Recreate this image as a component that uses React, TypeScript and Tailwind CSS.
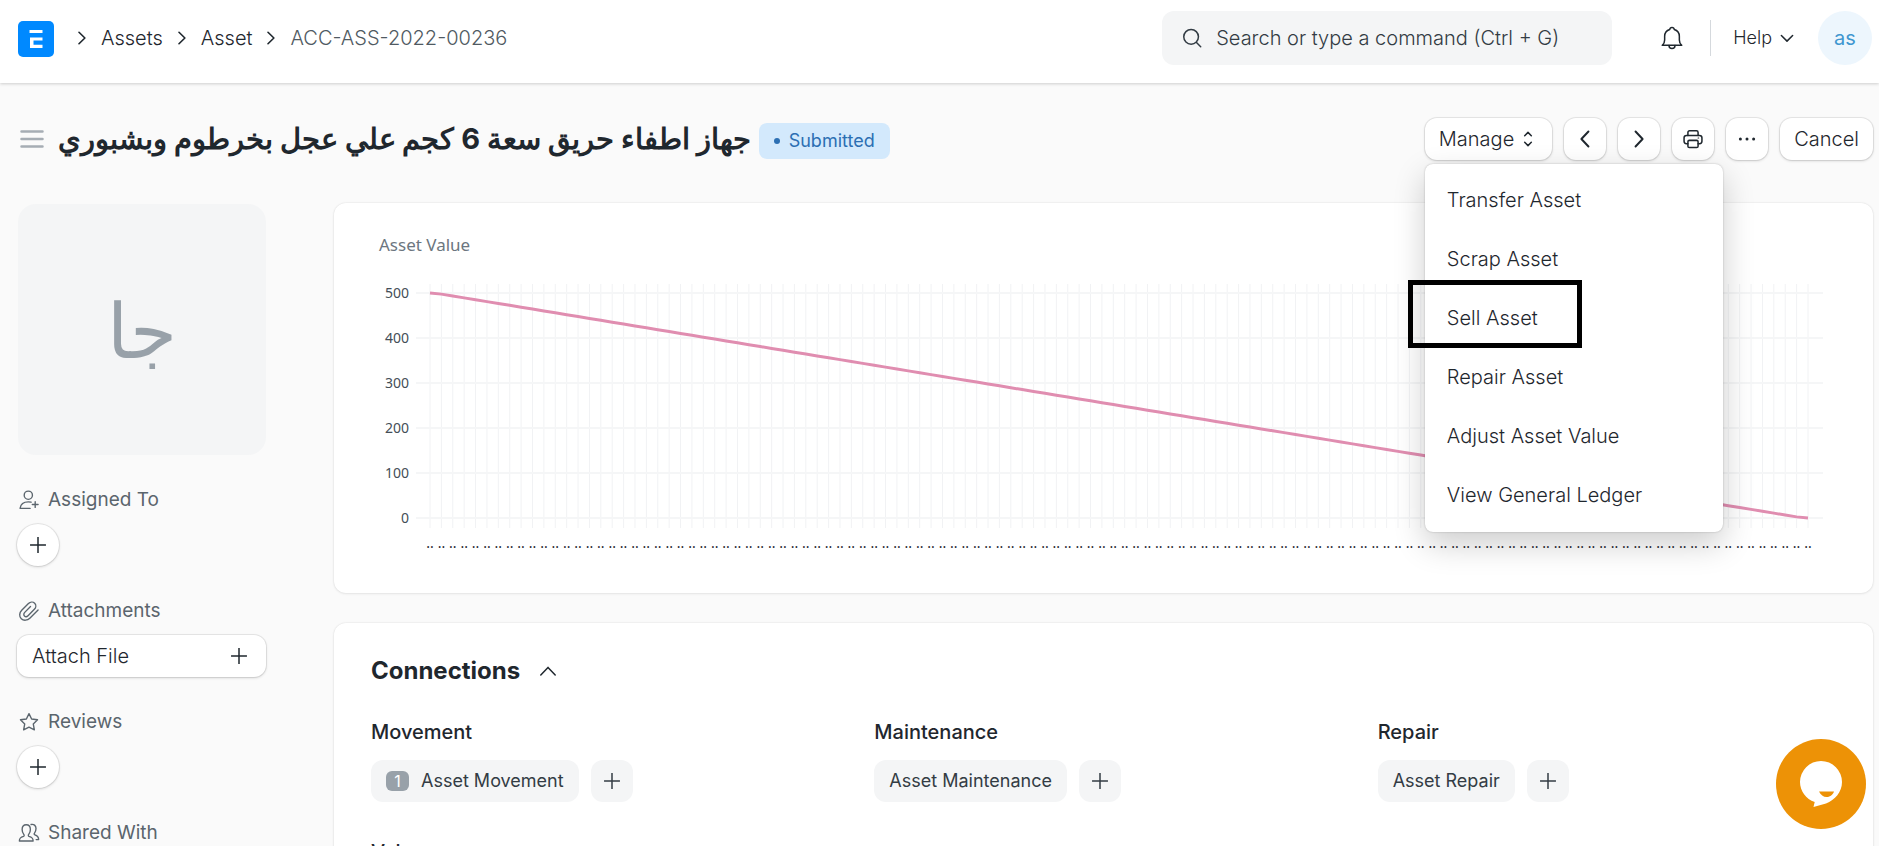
import React from "react";

const menuItems = [
  "Transfer Asset",
  "Scrap Asset",
  "Sell Asset",
  "Repair Asset",
  "Adjust Asset Value",
  "View General Ledger",
];

const connections = [
  { title: "Movement", doctype: "Asset Movement", count: 1 },
  { title: "Maintenance", doctype: "Asset Maintenance" },
  { title: "Repair", doctype: "Asset Repair" },
  { title: "Value", doctype: "Asset Value Adjustment" },
];

const btn =
  "flex h-[42px] items-center rounded-xl bg-white text-[#1f272e] shadow-[0_0_0_1px_rgba(0,0,0,0.07),0_1px_3px_rgba(0,0,0,0.16)]";
const card =
  "rounded-xl bg-white shadow-[0_0_2px_rgba(0,0,0,0.12),0_1px_3px_rgba(0,0,0,0.06)]";

type IconProps = {
  className?: string;
  width?: number;
  children: React.ReactNode;
};

const Icon = ({ className = "size-6", width = 1, children }: IconProps) => (
  <svg
    viewBox="0 0 16 16"
    className={`shrink-0 ${className}`}
    fill="none"
    stroke="currentColor"
    strokeWidth={width}
    strokeLinecap="round"
    strokeLinejoin="round"
    aria-hidden="true"
  >
    {children}
  </svg>
);

const Plus = () => (
  <Icon>
    <path d="M8 2.7v10.6M2.7 8h10.6" strokeLinecap="butt" />
  </Icon>
);

const ChevronRight = () => (
  <Icon className="size-5" width={1.3}>
    <path d="M5.6 3.4 10.3 8l-4.7 4.6" />
  </Icon>
);

const Navbar = () => (
  <header className="flex h-[83px] shrink-0 items-center bg-white pr-[7px] pb-[7px] pl-[18px] shadow-[0_1px_3px_rgba(0,0,0,0.18)]">
    <a href="#home" aria-label="Home" className="mt-[2px]">
      <svg viewBox="0 0 36 36" className="size-9">
        <rect width="36" height="36" rx="5" fill="#0089ff" />
        <path
          d="M11.5 9H24.5V12H11.5zM12 16.500H24.500V19.500H15.500V23.800H24.500V27H12z"
          fill="#fff"
        />
      </svg>
    </a>
    <nav
      aria-label="Breadcrumb"
      className="ml-[18px] flex items-center gap-[9px] text-xl font-light text-[#1f272e]"
    >
      <ChevronRight />
      <a href="#assets">Assets</a>
      <ChevronRight />
      <a href="#asset">Asset</a>
      <ChevronRight />
      <a href="#doc" className="text-[#505a62]">
        ACC-ASS-2022-00236
      </a>
    </nav>
    <label className="ml-auto flex h-[54px] w-[450px] items-center gap-3 rounded-xl bg-[#f4f5f6] px-[18px] text-[#333c44]">
      <Icon>
        <circle cx="7.4" cy="7.2" r="4.9" />
        <path d="m11 11 2.8 2.8" />
      </Icon>
      <input
        type="text"
        aria-label="Search"
        placeholder="Search or type a command (Ctrl + G)"
        className="w-full bg-transparent text-xl font-light outline-none placeholder:text-[#333c44]"
      />
    </label>
    <button type="button" aria-label="Notifications" className="ml-12">
      <Icon className="size-6 text-[#1f272e]">
        <path d="M1.500 12.900h13c-1.200-1-1.600-2-1.600-3.600V6.800C12.900 4.600 11.500 2.900 9.500 2.300 9.400 1.500 8.800 1 8 1s-1.400.5-1.500 1.300C4.500 2.900 3.100 4.600 3.100 6.800v2.500c0 1.600-.4 2.600-1.600 3.600Z" />
        <path d="M6 13c0 1.200.8 2 2 2s2-.8 2-2" />
      </Icon>
    </button>
    <div className="mr-[22px] ml-[26px] h-9 w-px bg-[#d5d9dd]" />
    <button
      type="button"
      className="flex items-center gap-[5px] text-lg font-light text-[#1f272e]"
    >
      Help
      <Icon className="size-5" width={1.2}>
        <path d="M3.500 6 8 10.500 12.500 6" />
      </Icon>
    </button>
    <button
      type="button"
      className="ml-[21px] size-[54px] rounded-full bg-[#edf6fd] text-xl text-[#3f97d0]"
    >
      as
    </button>
  </header>
);

const ManageMenu = () => (
  <div className="relative">
    <button
      type="button"
      aria-expanded="true"
      className={`${btn} gap-[2px] pr-3 pl-[14px] text-xl font-light`}
    >
      Manage
      <Icon>
        <path d="M5.800 5.800 8 3.600l2.200 2.200M5.800 10.200l2.200 2.200 2.200-2.200" />
      </Icon>
    </button>
    <ul className="absolute top-[46px] left-0 z-10 flex w-[298px] flex-col rounded-lg bg-white py-[7px] text-xl font-light text-[#1f272e] shadow-[0_0_2px_rgba(0,0,0,0.25),0_12px_32px_rgba(0,0,0,0.2)]">
      {menuItems.map((item) => (
        <li key={item} className="relative">
          <a href="#action" className="block px-[22px] py-[14px] leading-[31px]">
            {item}
          </a>
          {item === "Sell Asset" && (
            <span className="pointer-events-none absolute -top-[9px] -left-[17px] h-[68px] w-[174px] border-5 border-black" />
          )}
        </li>
      ))}
    </ul>
  </div>
);

const PageHead = () => (
  <div className="flex items-center pt-[35px] pr-[6px] pl-5">
    <button type="button" aria-label="Toggle sidebar" className="text-[#a6adb4]">
      <svg
        viewBox="0 0 24 24"
        className="size-6"
        stroke="currentColor"
        strokeWidth="2.5"
        strokeLinecap="round"
      >
        <path d="M1.500 4.500h21M1.500 12h21M1.500 19.500h21" />
      </svg>
    </button>
    <h1
      dir="rtl"
      className="ml-[14px] text-[29px] leading-[42px] font-bold whitespace-nowrap text-[#1f272e]"
    >
      جهاز اطفاء حريق سعة 6 كجم علي عجل بخرطوم وبشبوري
    </h1>
    <span className="mt-1 ml-2 flex h-9 items-center gap-[9px] rounded-lg bg-[#d3e9fc] px-[15px] text-lg text-[#2c6fb3]">
      <span className="size-[6px] rounded-full bg-[#2c6fb3]" />
      Submitted
    </span>
    <div className="ml-auto flex gap-3">
      <ManageMenu />
      <button
        type="button"
        aria-label="Previous"
        className={`${btn} w-[42px] justify-center`}
      >
        <Icon width={1.3}>
          <path d="M10.300 3 5.600 8l4.700 5" />
        </Icon>
      </button>
      <button
        type="button"
        aria-label="Next"
        className={`${btn} w-[42px] justify-center`}
      >
        <Icon width={1.3}>
          <path d="M5.700 3 10.400 8l-4.700 5" />
        </Icon>
      </button>
      <button
        type="button"
        aria-label="Print"
        className={`${btn} w-[42px] justify-center`}
      >
        <Icon className="size-[22px]" width={1.1}>
          <path d="M4.300 5.400V3.200c0-.7.500-1.200 1.200-1.200h5c.7 0 1.200.5 1.200 1.200v2.200" />
          <path d="M4.300 11.400H3.200c-.9 0-1.700-.7-1.700-1.700V7.100c0-.9.800-1.700 1.700-1.700h9.600c.9 0 1.700.8 1.700 1.700v2.600c0 1-.8 1.700-1.700 1.700h-1.100" />
          <rect x="4.300" y="9" width="7.400" height="5.200" rx="1" />
          <path d="M11.700 7.300h.4" strokeWidth=".8" />
        </Icon>
      </button>
      <button
        type="button"
        aria-label="Menu"
        className={`${btn} w-[42px] justify-center`}
      >
        <Icon>
          <g fill="currentColor" stroke="none">
            <circle cx="3.600" cy="8" r="1" />
            <circle cx="8" cy="8" r="1" />
            <circle cx="12.400" cy="8" r="1" />
          </g>
        </Icon>
      </button>
      <button type="button" className={`${btn} px-[14px] text-xl font-light`}>
        Cancel
      </button>
    </div>
  </div>
);

type SectionProps = {
  title: string;
  icon: React.ReactNode;
  children?: React.ReactNode;
};

const SidebarSection = ({ title, icon, children }: SectionProps) => (
  <section className="mb-[33px] flex flex-col gap-3">
    <h2 className="flex h-6 items-center gap-2 pl-px text-[19px] text-[#5b656d]">
      <Icon className="size-[22px]">{icon}</Icon>
      {title}
    </h2>
    {children}
  </section>
);

const AddButton = ({ label }: { label: string }) => (
  <button
    type="button"
    aria-label={label}
    className="flex size-[42px] items-center justify-center rounded-full bg-white text-[#1f272e] shadow-[0_0_0_1px_rgba(0,0,0,0.07),0_1px_3px_rgba(0,0,0,0.16)]"
  >
    <Plus />
  </button>
);

const Sidebar = () => (
  <aside className="w-[249px] shrink-0 pt-px">
    <div className="mb-[33px] ml-px flex h-[251px] items-center justify-center rounded-[18px] bg-[#f4f5f6] text-[76px] text-[#98a1a9]">
      جا
    </div>
    <SidebarSection
      title="Assigned To"
      icon={
        <>
          <circle cx="7.500" cy="4.500" r="3" />
          <path d="M9.500 9.600c-.6-.2-1.300-.2-2-.2-3.300 0-5.600 1.900-6 4.700h7.300M12.500 9.200v4.200M10.400 11.300h4.200" />
        </>
      }
    >
      <AddButton label="Assign" />
    </SidebarSection>
    <SidebarSection
      title="Attachments"
      icon={
        <path d="M14.600 7.300 8.600 13.200c-1.800 1.800-4.500 2-6.200.4S.9 9.300 2.700 7.500l4.900-4.900c1.300-1.300 3.300-1.500 4.500-.3s1.100 3.200-.2 4.500l-4.600 4.600c-.8.800-1.900.9-2.600.2s-.6-1.800.2-2.600l4.200-4.200" />
      }
    >
      <button
        type="button"
        className={`${btn} justify-between px-[15px] text-xl font-light`}
      >
        Attach File
        <Plus />
      </button>
    </SidebarSection>
    <SidebarSection
      title="Reviews"
      icon={
        <path d="m8 1.900 1.900 3.900 4.300.6-3.100 3 .8 4.300L8 11.700l-3.900 2 .8-4.300-3.100-3 4.300-.6Z" />
      }
    >
      <AddButton label="Add review" />
    </SidebarSection>
    <SidebarSection
      title="Shared With"
      icon={
        <>
          <path d="M1 13.800c0-2 .6-2.600 3-3.300.6-.2.600-1 .2-1.500C3.400 8 3 7 3 5.500 3 3.400 4.200 2 6 2s3 1.400 3 3.500C9 7 8.600 8 7.800 9c-.4.500-.4 1.300.2 1.500 2.400.7 3 1.300 3 3.300Z" />
          <path d="M9.500 1.800c2-.5 3.600.8 3.600 3 0 1.400-.4 2.300-1.100 3.300-.4.500-.3 1 .3 1.200 2.100.7 2.700 1.400 2.700 3.500h-1.800" />
        </>
      }
    />
  </aside>
);

const POINTS = 122;
const STEP = 1378 / (POINTS - 1);
const pointX = (i: number) => 96 + i * STEP;
const valueY = (v: number) => 315 - (v * 225) / 500;

// first and last periods are only partly depreciated
const valueAt = (i: number) => {
  if (i === 0) return 500;
  if (i === POINTS - 1) return 0;
  return 500 - ((i - 0.4) * 500) / (POINTS - 1.8);
};

const AssetChart = () => {
  const points = Array.from({ length: POINTS }, (_, i) => i);
  return (
    <div className={card}>
      <svg
        viewBox="0 0 1539 390"
        className="block w-full font-['Noto_Sans',sans-serif]"
        role="img"
        aria-label="Asset Value"
      >
        <text x="45" y="48" fontSize="17" fill="#6c7680">
          Asset Value
        </text>
        <g stroke="#f1f2f4" strokeWidth="1">
          {points.map((i) => (
            <path key={i} d={`M${pointX(i)} 81V325`} />
          ))}
        </g>
        {[500, 400, 300, 200, 100, 0].map((v) => (
          <g key={v}>
            <path d={`M82 ${valueY(v)}H1489`} stroke="#f5f6f7" strokeWidth="2" />
            <text
              x="75"
              y={valueY(v) + 5}
              fontSize="14"
              textAnchor="end"
              fill="#444e57"
            >
              {v}
            </text>
          </g>
        ))}
        <g fontSize="14" textAnchor="middle" fill="#1f272e">
          {points.map((i) => (
            <text key={i} x={pointX(i)} y="345">
              ..
            </text>
          ))}
        </g>
        <polyline
          points={points.map((i) => `${pointX(i)},${valueY(valueAt(i))}`).join(" ")}
          fill="none"
          stroke="#e08db0"
          strokeWidth="3"
        />
      </svg>
    </div>
  );
};

const Connections = () => (
  <section className={`${card} px-[37px] pt-8`}>
    <button
      type="button"
      aria-expanded="true"
      className="flex items-center gap-4 text-2xl font-bold text-[#1f272e]"
    >
      Connections
      <Icon>
        <path d="M3.200 10.600 8 5.600l4.800 5" />
      </Icon>
    </button>
    <div className="mt-[31px] grid grid-cols-3 gap-x-[45px] gap-y-9">
      {connections.map(({ title, doctype, count }) => (
        <div key={title}>
          <h3 className="text-xl leading-7 font-medium text-[#1f272e]">{title}</h3>
          <div className="mt-[14px] flex gap-3">
            <a
              href="#list"
              className="flex h-[42px] items-center gap-3 rounded-xl bg-[#f4f5f6] px-[15px] text-lg text-[#333c44]"
            >
              {count && (
                <span className="flex h-5 w-[23px] items-center justify-center rounded-md bg-[#98a1a9] text-base text-white">
                  {count}
                </span>
              )}
              {doctype}
            </a>
            <button
              type="button"
              aria-label={`New ${doctype}`}
              className="flex size-[42px] items-center justify-center rounded-xl bg-[#f4f5f6] text-[#333c44]"
            >
              <Plus />
            </button>
          </div>
        </div>
      ))}
    </div>
  </section>
);

const ChatButton = () => (
  <button
    type="button"
    aria-label="Chat"
    className="fixed right-[13px] bottom-[17px] z-20 size-[90px] rounded-full bg-[#ed9206]"
  >
    <svg viewBox="0 0 90 90" className="size-full">
      <path
        d="M45 22a21 21 0 0 1 21 21c0 10-7 18-16 21.500L37.500 68l1.200-5C30 60 24 52 24 43a21 21 0 0 1 21-21Z"
        fill="#fff"
      />
      <path d="M43 52.500h15c-1.500 4-4.500 5.500-7.500 5.500S44.500 56 43 52.500Z" fill="#ed9206" />
    </svg>
  </button>
);

export default function App() {
  return (
    <div className="flex h-screen flex-col overflow-hidden bg-[#fafafa] font-['Inter','Noto_Sans',sans-serif]">
      <Navbar />
      <PageHead />
      <div className="flex gap-[68px] pt-[43px] pr-[6px] pl-[17px]">
        <Sidebar />
        <main className="flex min-w-0 flex-1 flex-col gap-[30px]">
          <AssetChart />
          <Connections />
        </main>
      </div>
      <ChatButton />
    </div>
  );
}
